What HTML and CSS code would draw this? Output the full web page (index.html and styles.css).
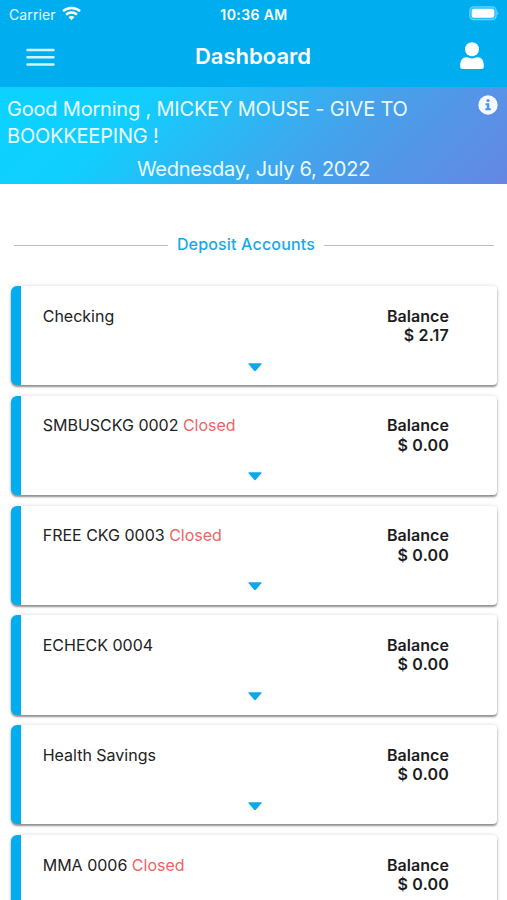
FILE: index.html
```
<!DOCTYPE html>
<html lang="en">
<head>
<meta charset="utf-8">
<title>Dashboard</title>
<link rel="stylesheet" href="styles.css">
</head>
<body>
<header class="top">
  <div class="status">
    <div class="carrier"><span class="carrier-name">Carrier</span>
      <svg class="wifi" width="19" height="15" viewBox="0 0 19 15" fill="none" stroke="#fff" stroke-width="2.5"><path d="M1 5.200C5.700.9 13.300.9 18 5.200"/><path d="M4.100 8.600C7.200 5.800 11.800 5.800 14.900 8.600"/><path d="M6.500 11L9.500 14.200L12.500 11C10.800 9.500 8.200 9.500 6.500 11Z" fill="#fff" stroke="none"/></svg>
    </div>
    <div class="clock">10:36 AM</div>
    <svg class="battery" width="31" height="15" viewBox="0 0 31 15"><rect x="1.800" y=".8" width="26.400" height="12.900" rx="4" fill="#2bbcf2" stroke="#6ad0f6" stroke-width="1.200"/><rect x="3.700" y="2.700" width="22.600" height="9.100" rx="2.200" fill="#fff"/><path d="M29.300 5.200Q31.200 7.200 29.300 9.200Z" fill="#7dd6f8"/></svg>
  </div>
  <nav class="nav">
    <svg class="menu" width="29" height="18" viewBox="0 0 29 18" stroke="#d3f3ff" stroke-width="2.500" stroke-linecap="round"><path d="M1.500 2H27.500M1.500 9.200H27.500M1.500 16.400H27.500"/></svg>
    <h1 class="title">Dashboard</h1>
    <svg class="person" width="24" height="28" viewBox="0 0 24 28" fill="#fff"><circle cx="12" cy="7.200" r="7"/><path d="M.200 23.500C.200 18.500 2.500 15.300 6.500 15.300C8.500 15.300 9.500 16.400 12 16.400S15.500 15.300 17.500 15.300C21.500 15.300 23.800 18.500 23.800 23.500V24.500Q23.800 27 21.300 27H2.700Q.200 27 .200 24.500Z"/></svg>
  </nav>
</header>
<section class="banner">
  <p class="greeting">Good Morning , MICKEY MOUSE - GIVE TO<br>BOOKKEEPING !</p>
  <p class="date">Wednesday, July 6, 2022</p>
  <svg class="info" width="20" height="20" viewBox="0 0 20 20"><circle cx="10" cy="10" r="9.700" fill="#f5f8fe"/><circle cx="10" cy="5.600" r="1.600" fill="#4c98e5"/><path d="M7.500 8.300H11.300V13.300H12.800V15.200H7.300V13.300H8.800V10.200H7.500Z" fill="#4c98e5"/></svg>
</section>
<h2 class="divider"><span>Deposit Accounts</span></h2>
<main class="accounts">
  <article class="card"><div class="row"><div class="name">Checking</div><div class="balance">Balance<br><span class="amount">$ 2.17</span></div></div><svg class="caret" width="14" height="9" viewBox="0 0 14 9"><path d="M1.100.200H12.900Q14.200.200 13.400 1.300L8.100 7.600Q7 8.900 5.900 7.600L.600 1.300Q-.200.200 1.100.200Z"/></svg></article>
  <article class="card"><div class="row"><div class="name">SMBUSCKG 0002 <em>Closed</em></div><div class="balance">Balance<br><span class="amount">$ 0.00</span></div></div><svg class="caret" width="14" height="9" viewBox="0 0 14 9"><path d="M1.100.200H12.900Q14.200.200 13.400 1.300L8.100 7.600Q7 8.900 5.900 7.600L.600 1.300Q-.200.200 1.100.200Z"/></svg></article>
  <article class="card"><div class="row"><div class="name">FREE CKG 0003 <em>Closed</em></div><div class="balance">Balance<br><span class="amount">$ 0.00</span></div></div><svg class="caret" width="14" height="9" viewBox="0 0 14 9"><path d="M1.100.200H12.900Q14.200.200 13.400 1.300L8.100 7.600Q7 8.900 5.900 7.600L.600 1.300Q-.200.200 1.100.200Z"/></svg></article>
  <article class="card"><div class="row"><div class="name">ECHECK 0004</div><div class="balance">Balance<br><span class="amount">$ 0.00</span></div></div><svg class="caret" width="14" height="9" viewBox="0 0 14 9"><path d="M1.100.200H12.900Q14.200.200 13.400 1.300L8.100 7.600Q7 8.900 5.900 7.600L.600 1.300Q-.200.200 1.100.200Z"/></svg></article>
  <article class="card"><div class="row"><div class="name">Health Savings</div><div class="balance">Balance<br><span class="amount">$ 0.00</span></div></div><svg class="caret" width="14" height="9" viewBox="0 0 14 9"><path d="M1.100.200H12.900Q14.200.200 13.400 1.300L8.100 7.600Q7 8.900 5.900 7.600L.600 1.300Q-.200.200 1.100.200Z"/></svg></article>
  <article class="card"><div class="row"><div class="name">MMA 0006 <em>Closed</em></div><div class="balance">Balance<br><span class="amount">$ 0.00</span></div></div><svg class="caret" width="14" height="9" viewBox="0 0 14 9"><path d="M1.100.200H12.900Q14.200.200 13.400 1.300L8.100 7.600Q7 8.900 5.900 7.600L.600 1.300Q-.200.200 1.100.200Z"/></svg></article>
</main>
</body>
</html>
```
FILE: styles.css
```
* { box-sizing: border-box; }
body {
  margin: 0;
  height: 900px;
  overflow: hidden;
  background: #fff;
  font-family: Inter, "Liberation Sans", sans-serif;
  color: #222;
}
h1, h2, p { margin: 0; }
svg { display: block; flex: none; }
.top { height: 87px; background: #00aeef; color: #fff; }
.status {
  height: 28px;
  display: grid;
  grid-template-columns: 1fr auto 1fr;
  align-items: center;
  padding: 0 8px 0 9px;
}
.carrier { display: flex; gap: 6px; align-items: center; font-size: 14px; letter-spacing: 0.1px; color: #e6f8ff; }
.wifi { margin-top: -2px; }
.clock { font-size: 14px; font-weight: 600; letter-spacing: 0.4px; }
.battery { justify-self: end; margin-top: -2px; }
.nav {
  height: 59px;
  display: grid;
  grid-template-columns: 1fr auto 1fr;
  align-items: center;
  padding: 0 23px 3px 26px;
}
.menu { fill: none; margin-top: 1px; }
.title { font-size: 22px; font-weight: 600; line-height: 28px; margin: 0 2px 0 -2px; }
.person { justify-self: end; }
.banner {
  position: relative;
  height: 97px;
  padding: 9px 7px 0;
  background: linear-gradient(135deg, #0cd2ff 0%, #10cffe 25%, #46a1eb 65%, #6686e2 100%);
  color: #e9fbff;
  font-size: 20px;
}
.greeting { line-height: 27px; letter-spacing: -0.2px; white-space: nowrap; }
.date { text-align: center; line-height: 27px; letter-spacing: -0.250px; margin-top: 6px; }
.info { position: absolute; top: 8px; right: 9px; }
.divider {
  display: flex;
  align-items: center;
  gap: 9px;
  height: 20px;
  margin: 50px 13px 0 14px;
  color: #17a9e8;
  font-size: 16px;
  font-weight: 500;
  letter-spacing: 0.170px;
}
.divider::before, .divider::after { content: ""; flex: 1; height: 1px; background: #bcbfc0; margin-top: 2px; }
.divider::after { flex: 0 0 170px; }
.divider span { flex: none; }
.accounts { display: flex; flex-direction: column; gap: 10.500px; padding: 32px 10px 0 11.300px; }
.card {
  flex: none;
  height: 99.300px;
  padding: 20.600px 48px 0 21.400px;
  border-left: 10.300px solid #00aeef;
  border-radius: 6px 4px 4px 6px;
  background: #fff;
  box-shadow: 0 2px 2px rgba(0, 0, 0, .4), 0 0 4px rgba(0, 0, 0, .14);
}
.row { display: flex; justify-content: space-between; height: 56px; line-height: 19.500px; font-size: 16px; }
.name { white-space: pre; }
.name em { font-style: normal; color: #ee6467; }
.balance { text-align: right; font-weight: 600; color: #1c1c1e; letter-spacing: 0.050px; }
.amount { letter-spacing: 0.200px; }
.caret { margin: 0 0 0 205px; fill: #0ba9ea; }
```
